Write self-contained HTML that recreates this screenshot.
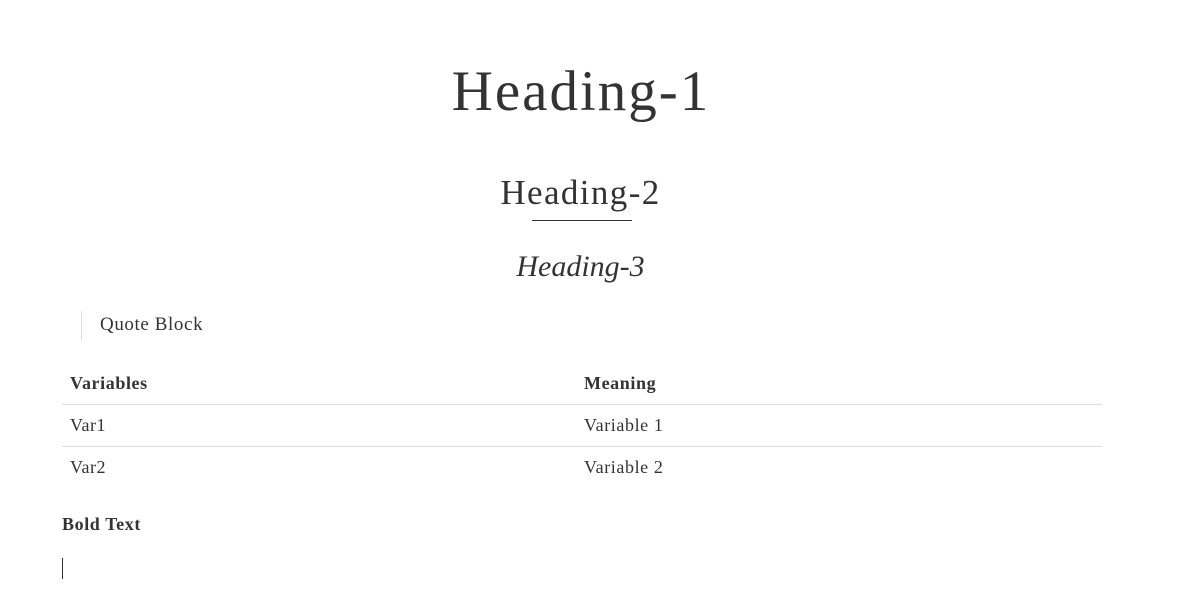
<!DOCTYPE html>
<html><head><meta charset="utf-8"><style>
body{margin:0;width:1201px;height:593px;background:#fff;color:#333;font-family:"Liberation Serif",serif;position:relative;overflow:hidden}
.a{position:absolute;white-space:nowrap;line-height:1}
.c{left:0;width:1161px;text-align:center}
</style></head><body>
<div class="a c" style="top:63px;font-size:57px;left:0;width:1162px;letter-spacing:2px">Heading-1</div>
<div class="a c" style="top:175px;font-size:35px;letter-spacing:1.4px">Heading-2</div>
<div class="a" style="left:532px;top:220px;width:100px;height:1px;background:#333"></div>
<div class="a c" style="top:252px;font-size:30px;font-style:italic">Heading-3</div>
<div class="a" style="left:81px;top:311px;width:1px;height:29px;background:#ddd"></div>
<div class="a" style="left:100px;top:315px;font-size:19px;letter-spacing:0.6px">Quote Block</div>
<div class="a" style="left:70px;top:374px;font-size:18px;font-weight:bold;letter-spacing:0.6px">Variables</div>
<div class="a" style="left:584px;top:374px;font-size:18px;font-weight:bold;letter-spacing:0.6px">Meaning</div>
<div class="a" style="left:62px;top:404px;width:1040px;height:1px;background:#ddd"></div>
<div class="a" style="left:70px;top:416px;font-size:18px;letter-spacing:0.5px">Var1</div>
<div class="a" style="left:584px;top:416px;font-size:18px;letter-spacing:0.6px">Variable 1</div>
<div class="a" style="left:62px;top:446px;width:1040px;height:1px;background:#ddd"></div>
<div class="a" style="left:70px;top:458px;font-size:18px;letter-spacing:0.5px">Var2</div>
<div class="a" style="left:584px;top:458px;font-size:18px;letter-spacing:0.6px">Variable 2</div>
<div class="a" style="left:62px;top:515px;font-size:18px;font-weight:bold;letter-spacing:0.6px">Bold Text</div>
<div class="a" style="left:62px;top:558px;width:1px;height:21px;background:#333"></div>
</body></html>
